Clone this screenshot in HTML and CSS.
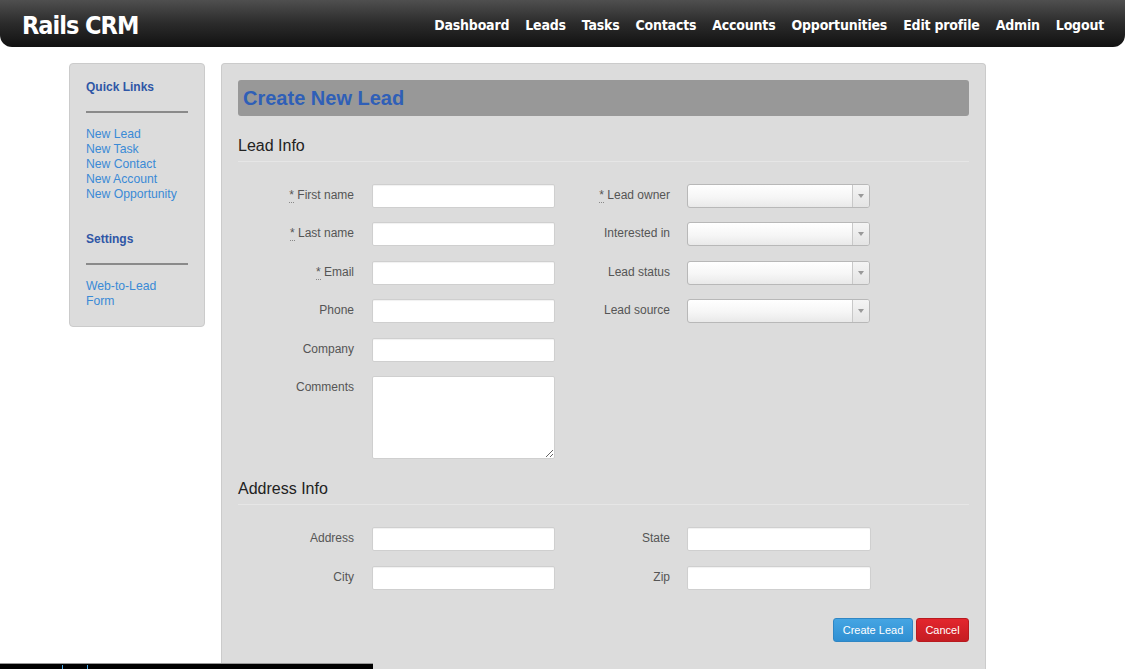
FILE: index.html
```html
<!DOCTYPE html>
<html>
<head>
<meta charset="utf-8">
<title>Rails CRM - Create New Lead</title>
<link rel="stylesheet" href="styles.css">
</head>
<body>
<header class="navbar">
  <a class="brand" href="#">Rails CRM</a>
  <nav class="nav">
    <a href="#">Dashboard</a>
    <a href="#">Leads</a>
    <a href="#">Tasks</a>
    <a href="#">Contacts</a>
    <a href="#">Accounts</a>
    <a href="#">Opportunities</a>
    <a href="#">Edit profile</a>
    <a href="#">Admin</a>
    <a href="#">Logout</a>
  </nav>
</header>

<div class="container">
  <aside class="sidebar">
    <h4 class="side-title">Quick Links</h4>
    <hr class="side-rule">
    <ul class="side-links">
      <li><a href="#">New Lead</a></li>
      <li><a href="#">New Task</a></li>
      <li><a href="#">New Contact</a></li>
      <li><a href="#">New Account</a></li>
      <li><a href="#">New Opportunity</a></li>
    </ul>
    <h4 class="side-title second">Settings</h4>
    <hr class="side-rule">
    <ul class="side-links">
      <li><a href="#">Web-to-Lead<br>Form</a></li>
    </ul>
  </aside>

  <main class="panel">
    <h1 class="page-title">Create New Lead</h1>

    <h3 class="section-title">Lead Info</h3>
    <div class="fields">
      <div class="col left">
        <div class="row"><label><abbr title="required">*</abbr> First name</label><input type="text"></div>
        <div class="row"><label><abbr title="required">*</abbr> Last name</label><input type="text"></div>
        <div class="row"><label><abbr title="required">*</abbr> Email</label><input type="text"></div>
        <div class="row"><label>Phone</label><input type="text"></div>
        <div class="row"><label>Company</label><input type="text"></div>
        <div class="row"><label>Comments</label><textarea></textarea></div>
      </div>
      <div class="col right">
        <div class="row"><label><abbr title="required">*</abbr> Lead owner</label><div class="select"><span class="arrow"></span></div></div>
        <div class="row"><label>Interested in</label><div class="select"><span class="arrow"></span></div></div>
        <div class="row"><label>Lead status</label><div class="select"><span class="arrow"></span></div></div>
        <div class="row"><label>Lead source</label><div class="select"><span class="arrow"></span></div></div>
      </div>
    </div>

    <h3 class="section-title address">Address Info</h3>
    <div class="fields address-fields">
      <div class="col left">
        <div class="row"><label>Address</label><input type="text"></div>
        <div class="row"><label>City</label><input type="text"></div>
      </div>
      <div class="col right">
        <div class="row"><label>State</label><input type="text"></div>
        <div class="row"><label>Zip</label><input type="text"></div>
      </div>
    </div>

    <div class="actions">
      <button class="btn btn-primary">Create Lead</button>
      <button class="btn btn-danger">Cancel</button>
    </div>
  </main>
</div>

<div class="bottom-bar"><span class="mark m1"></span><span class="mark m2"></span></div>
</body>
</html>
```

FILE: styles.css
```css
* { box-sizing: border-box; }

html, body {
  margin: 0;
  padding: 0;
  background: #fff;
  font-family: "Liberation Sans", Arial, sans-serif;
  color: #333;
  height: 669px;
  overflow: hidden;
}

a { text-decoration: none; }

.navbar {
  height: 47px;
  display: flex;
  align-items: center;
  justify-content: space-between;
  padding: 0 21px 0 22px;
  background: linear-gradient(to bottom, #4f4f4f 0%, #2b2b2b 50%, #111 100%);
  border-radius: 0 0 12px 12px;
}

.brand {
  color: #fff;
  font-family: "DejaVu Sans Condensed", "DejaVu Sans", sans-serif;
  font-stretch: condensed;
  font-weight: bold;
  font-size: 25px;
  letter-spacing: -1px;
  padding-top: 4px;
}

.nav {
  display: flex;
  gap: 16px;
  padding-top: 2px;
}

.nav a {
  color: #fff;
  font-family: "DejaVu Sans Condensed", "DejaVu Sans", sans-serif;
  font-stretch: condensed;
  font-weight: bold;
  font-size: 14px;
  letter-spacing: -0.2px;
}

.container {
  display: flex;
  align-items: flex-start;
  gap: 16px;
  padding: 16px 0 0 69px;
}

.sidebar {
  width: 136px;
  background: #dcdcdc;
  border: 1px solid #cbcbcb;
  border-radius: 4px;
  padding: 14px 16px 17px 16px;
}

.side-title {
  margin: 0;
  font-size: 12px;
  line-height: 18px;
  font-weight: bold;
  color: #2f56a6;
}

.side-title.second { margin-top: 28px; }

.side-rule {
  border: 0;
  height: 2px;
  background: #8a8a8a;
  margin: 15px 0 14px;
}

.side-links {
  list-style: none;
  margin: 0;
  padding: 0;
}

.side-links li {
  font-size: 12.2px;
  line-height: 15px;
}

.side-links a { color: #3a8ad6; }

.panel {
  width: 765px;
  height: 606px;
  background: #dcdcdc;
  border: 1px solid #cbcbcb;
  border-bottom: 0;
  border-radius: 4px 4px 0 0;
  padding: 16px 16px 0 16px;
}

.page-title {
  margin: 0;
  height: 36px;
  background: #989898;
  border-radius: 3px;
  padding: 0 5px;
  font-size: 20px;
  line-height: 37px;
  font-weight: bold;
  color: #2f5fb7;
}

.section-title {
  margin: 19px 0 0;
  padding-bottom: 4px;
  font-size: 16px;
  line-height: 22px;
  font-weight: normal;
  color: #222;
  border-bottom: 1px solid #e6e6e6;
}

.section-title.address { margin-top: 19px; }

.fields {
  display: flex;
  padding-top: 22px;
}

.col {
  display: flex;
  flex-direction: column;
  gap: 14.4px;
}

.col.left { width: 317px; }
.col.right { width: 316px; }

.address-fields .col { gap: 15px; }

.row {
  display: flex;
  align-items: flex-start;
}

.row label {
  width: 116px;
  text-align: right;
  font-size: 12px;
  line-height: 16px;
  padding-top: 3px;
  color: #555;
  margin-right: 18px;
}

.col.right .row label {
  width: 115px;
  margin-right: 17px;
}

abbr {
  text-decoration: none;
  border-bottom: 1px dotted #888;
  cursor: help;
}

input[type="text"] {
  width: 183px;
  height: 24px;
  margin: 0;
  background: #fff;
  border: 1px solid #cfcfcf;
  border-radius: 2px;
  box-shadow: inset 0 1px 1px rgba(0,0,0,0.06);
  font-size: 12px;
}

.col.right input[type="text"] { width: 184px; }

textarea {
  width: 183px;
  height: 83px;
  margin: 0;
  background: #fff;
  border: 1px solid #cfcfcf;
  border-radius: 2px;
  resize: both;
  font-family: inherit;
}

.select {
  width: 183px;
  height: 24px;
  position: relative;
  background: linear-gradient(to bottom, #ffffff 0%, #f6f6f6 55%, #e9e9e9 100%);
  border: 1px solid #b8b8b8;
  border-radius: 3px;
}

.select .arrow {
  position: absolute;
  right: 0;
  top: 0;
  width: 17px;
  height: 22px;
  border-left: 1px solid #c8c8c8;
  background: linear-gradient(to bottom, #f4f4f4, #e4e4e4);
  border-radius: 0 2px 2px 0;
}

.select .arrow::after {
  content: "";
  position: absolute;
  left: 5px;
  top: 9px;
  border-left: 3px solid transparent;
  border-right: 3px solid transparent;
  border-top: 4px solid #999;
}

.actions {
  display: flex;
  justify-content: flex-end;
  gap: 3px;
  margin-top: 28px;
}

.btn {
  height: 24px;
  border-radius: 3px;
  color: #fff;
  font-family: "Liberation Sans", Arial, sans-serif;
  font-size: 11px;
  white-space: nowrap;
  padding: 0;
  cursor: pointer;
}

.btn-primary {
  width: 80px;
  background: linear-gradient(to bottom, #45a5e3, #2f8fd2);
  border: 1px solid #2f86c4;
}

.btn-danger {
  width: 53px;
  background: linear-gradient(to bottom, #e3262d, #c51c22);
  border: 1px solid #b81a1f;
}

.bottom-bar {
  position: fixed;
  left: 0;
  bottom: 0;
  width: 373px;
  height: 6px;
  background: #000;
  border-top: 1px solid #999;
}

.mark {
  position: absolute;
  top: 1px;
  width: 1px;
  height: 4px;
  background: #4aa8e8;
}

.mark.m1 { left: 62px; }
.mark.m2 { left: 87px; }
```
